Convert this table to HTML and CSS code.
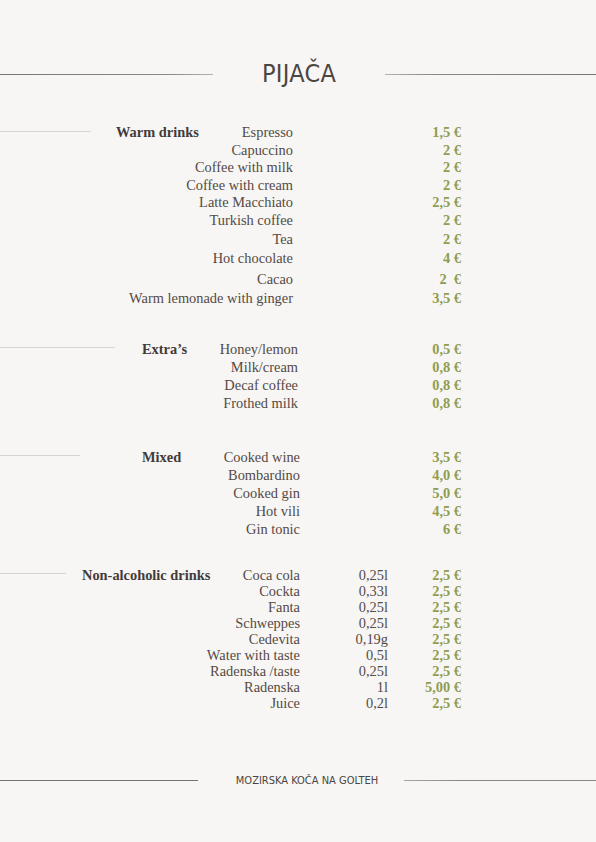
FILE: index.html
```html
<!DOCTYPE html>
<html lang="sl">
<head>
<meta charset="utf-8">
<title>Pijača</title>
<link rel="stylesheet" href="styles.css">
</head>
<body>
<div class="page">
  <header class="title-row">
    <span class="rule rule-l"></span>
    <h1 class="title">PIJAČA</h1>
    <span class="rule rule-r"></span>
  </header>

  <section class="menu warm">
    <div class="row"><div class="name-cell"><span class="sline"></span><span class="cat">Warm drinks</span><span class="name">Espresso</span></div><span class="vol"></span><span class="price">1,5 €</span></div>
    <div class="row"><div class="name-cell"><span class="name">Capuccino</span></div><span class="vol"></span><span class="price">2 €</span></div>
    <div class="row"><div class="name-cell"><span class="name">Coffee with milk</span></div><span class="vol"></span><span class="price">2 €</span></div>
    <div class="row"><div class="name-cell"><span class="name">Coffee with cream</span></div><span class="vol"></span><span class="price">2 €</span></div>
    <div class="row"><div class="name-cell"><span class="name">Latte Macchiato</span></div><span class="vol"></span><span class="price">2,5 €</span></div>
    <div class="row"><div class="name-cell"><span class="name">Turkish coffee</span></div><span class="vol"></span><span class="price">2 €</span></div>
    <div class="row gap1"><div class="name-cell"><span class="name">Tea</span></div><span class="vol"></span><span class="price">2 €</span></div>
    <div class="row gap1"><div class="name-cell"><span class="name">Hot chocolate</span></div><span class="vol"></span><span class="price">4 €</span></div>
    <div class="row gap3"><div class="name-cell"><span class="name">Cacao</span></div><span class="vol"></span><span class="price">2&nbsp; €</span></div>
    <div class="row gap1"><div class="name-cell"><span class="name">Warm lemonade with ginger</span></div><span class="vol"></span><span class="price">3,5 €</span></div>
  </section>

  <section class="menu extras">
    <div class="row"><div class="name-cell"><span class="sline"></span><span class="cat">Extra’s</span><span class="name">Honey/lemon</span></div><span class="vol"></span><span class="price">0,5 €</span></div>
    <div class="row"><div class="name-cell"><span class="name">Milk/cream</span></div><span class="vol"></span><span class="price">0,8 €</span></div>
    <div class="row"><div class="name-cell"><span class="name">Decaf coffee</span></div><span class="vol"></span><span class="price">0,8 €</span></div>
    <div class="row"><div class="name-cell"><span class="name">Frothed milk</span></div><span class="vol"></span><span class="price">0,8 €</span></div>
  </section>

  <section class="menu mixed">
    <div class="row"><div class="name-cell"><span class="sline"></span><span class="cat">Mixed</span><span class="name">Cooked wine</span></div><span class="vol"></span><span class="price">3,5 €</span></div>
    <div class="row"><div class="name-cell"><span class="name">Bombardino</span></div><span class="vol"></span><span class="price">4,0 €</span></div>
    <div class="row"><div class="name-cell"><span class="name">Cooked gin</span></div><span class="vol"></span><span class="price">5,0 €</span></div>
    <div class="row"><div class="name-cell"><span class="name">Hot vili</span></div><span class="vol"></span><span class="price">4,5 €</span></div>
    <div class="row"><div class="name-cell"><span class="name">Gin tonic</span></div><span class="vol"></span><span class="price">6 €</span></div>
  </section>

  <section class="menu soft">
    <div class="row"><div class="name-cell"><span class="sline"></span><span class="cat">Non-alcoholic drinks</span><span class="name">Coca cola</span></div><span class="vol">0,25l</span><span class="price">2,5 €</span></div>
    <div class="row"><div class="name-cell"><span class="name">Cockta</span></div><span class="vol">0,33l</span><span class="price">2,5 €</span></div>
    <div class="row"><div class="name-cell"><span class="name">Fanta</span></div><span class="vol">0,25l</span><span class="price">2,5 €</span></div>
    <div class="row"><div class="name-cell"><span class="name">Schweppes</span></div><span class="vol">0,25l</span><span class="price">2,5 €</span></div>
    <div class="row"><div class="name-cell"><span class="name">Cedevita</span></div><span class="vol">0,19g</span><span class="price">2,5 €</span></div>
    <div class="row"><div class="name-cell"><span class="name">Water with taste</span></div><span class="vol">0,5l</span><span class="price">2,5 €</span></div>
    <div class="row"><div class="name-cell"><span class="name">Radenska /taste</span></div><span class="vol">0,25l</span><span class="price">2,5 €</span></div>
    <div class="row"><div class="name-cell"><span class="name">Radenska</span></div><span class="vol">1l</span><span class="price">5,00 €</span></div>
    <div class="row"><div class="name-cell"><span class="name">Juice</span></div><span class="vol">0,2l</span><span class="price">2,5 €</span></div>
  </section>

  <footer class="foot-row">
    <span class="rule rule-l"></span>
    <span class="foot-text">MOZIRSKA KOČA NA GOLTEH</span>
    <span class="rule rule-r"></span>
  </footer>
</div>
</body>
</html>
```

FILE: styles.css
```css
html, body {
  margin: 0;
  padding: 0;
  background: #f7f6f4;
}

.page {
  width: 596px;
  height: 842px;
  background: #f7f6f4;
  color: #544a46;
  font-family: "Liberation Serif", "Times New Roman", serif;
  overflow: hidden;
}

.title-row {
  display: grid;
  grid-template-columns: 213px 1fr 211px;
  align-items: center;
  height: 30px;
  margin-top: 59px;
}

.rule {
  display: block;
  height: 1px;
  background: #7f7a76;
}

.title-row .rule-l {
  background: linear-gradient(to right, #7a7571, #8d8985 80%, #b6b2ae);
}
.title-row .rule-r {
  background: linear-gradient(to right, #b6b2ae, #8d8985 20%, #7a7571);
}

.title {
  margin: 0;
  text-align: center;
  font-family: "DejaVu Sans Condensed", "DejaVu Sans", sans-serif;
  font-stretch: condensed;
  font-weight: normal;
  font-size: 25px;
  line-height: 30px;
  color: #4b4542;
  letter-spacing: 0.3px;
}

.menu {
  font-size: 14.4px;
}

.row {
  display: grid;
  grid-template-columns: 300px 88px 73px;
  align-items: center;
}

.name-cell {
  display: flex;
  align-items: center;
  justify-content: flex-end;
  white-space: nowrap;
}

.sline {
  display: block;
  height: 1px;
  background: #d8d5d1;
  flex: none;
  align-self: center;
  margin-top: -2px;
}

.cat {
  font-weight: bold;
  color: #433b38;
}

.name-cell .cat + .name {
  margin-left: auto;
}

.vol {
  text-align: right;
}

.price {
  text-align: right;
  font-weight: bold;
  color: #8f9d50;
  white-space: nowrap;
}

/* Warm drinks */
.warm {
  margin-top: 35px;
}
.warm .row {
  line-height: 17.6px;
}
.warm .name-cell {
  padding-right: 7px;
}
.warm .sline {
  width: 91px;
}
.warm .cat {
  margin-left: 25px;
}
.warm .gap1 {
  margin-top: 1.4px;
}
.warm .gap3 {
  margin-top: 3.4px;
}

/* Extras */
.extras {
  margin-top: 32px;
}
.extras .row {
  line-height: 18.3px;
}
.extras .name-cell {
  padding-right: 2px;
}
.extras .sline {
  width: 115px;
}
.extras .cat {
  margin-left: 27px;
}

/* Mixed */
.mixed {
  margin-top: 35px;
}
.mixed .row {
  line-height: 18px;
}
.mixed .sline {
  width: 80px;
}
.mixed .cat {
  margin-left: 62px;
}

/* Non-alcoholic */
.soft {
  margin-top: 29px;
}
.soft .row {
  line-height: 16px;
}
.soft .sline {
  width: 66px;
}
.soft .cat {
  margin-left: 16px;
}

/* Footer */
.foot-row {
  display: grid;
  grid-template-columns: 198px 1fr 192px;
  align-items: center;
  height: 14px;
  margin-top: 63px;
}

.foot-row .rule-l {
  background: #77726e;
}
.foot-row .rule-r {
  background: linear-gradient(to right, #a8a4a0, #8a8682 30%, #8a8682);
}

.foot-text {
  text-align: center;
  padding-left: 12px;
  font-family: "DejaVu Sans Condensed", "DejaVu Sans", sans-serif;
  font-stretch: condensed;
  font-size: 11px;
  line-height: 14px;
  color: #4b4542;
}
```
